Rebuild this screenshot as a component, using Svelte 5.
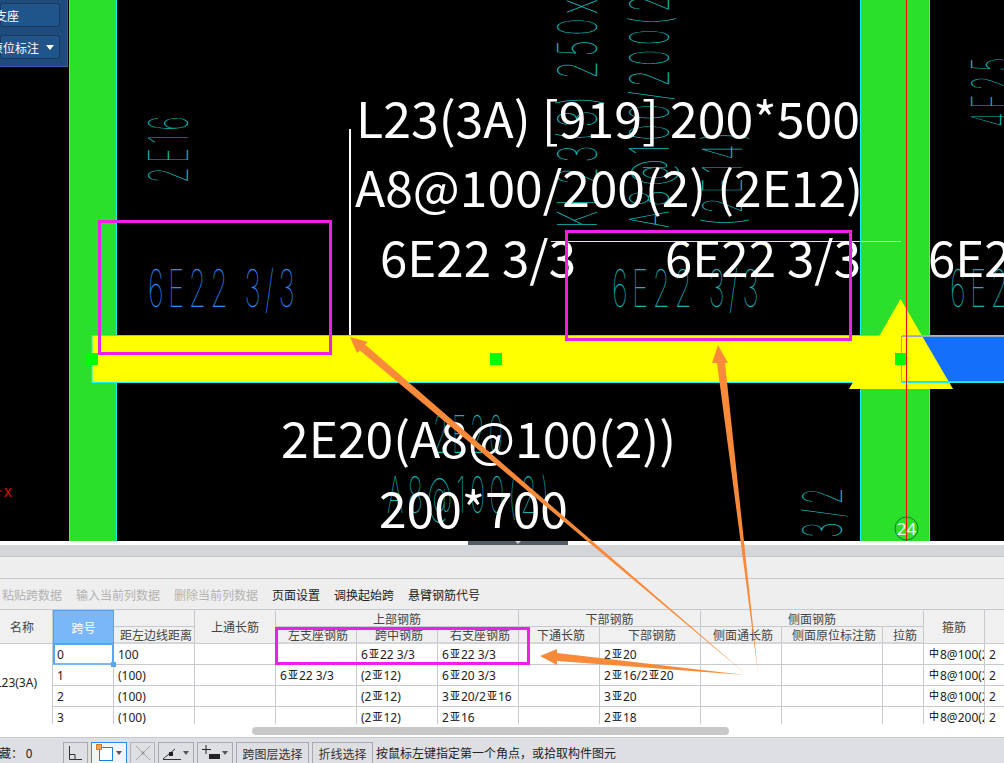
<script>
  const tools = [
    { label: '粘贴跨数据', off: true },
    { label: '输入当前列数据', off: true },
    { label: '删除当前列数据', off: true },
    { label: '页面设置' },
    { label: '调换起始跨' },
    { label: '悬臂钢筋代号' }
  ]

  // 亚 / 中 stand in for the rebar grade symbols
  const rows = [
    ['0', '100', '', '', '6亚22 3/3', '6亚22 3/3', '', '2亚20', '', '', '', '中8@100(2)', '2'],
    ['1', '(100)', '', '6亚22 3/3', '(2亚12)', '6亚20 3/3', '', '2亚16/2亚20', '', '', '', '中8@100(2)', '2'],
    ['2', '(100)', '', '', '(2亚12)', '3亚20/2亚16', '', '3亚20', '', '', '', '中8@100(2)', '2'],
    ['3', '(100)', '', '', '(2亚12)', '2亚16', '', '2亚18', '', '', '', '中8@200(2)', '2']
  ]

  const parts = (v) => v.split(/([亚中])/).filter(Boolean)
  const white = [
    { t: 'L23(3A) [919] 200*500', x: 356, y: 138, w: 504 },
    { t: 'A8@100/200(2) (2E12)', x: 355, y: 207, w: 508 },
    { t: '6E22 3/3', x: 380, y: 277, w: 196 },
    { t: '6E22 3/3', x: 665, y: 277, w: 196 },
    { t: '6E22 3/3', x: 928, y: 277, w: 196 },
    { t: '2E20(A8@100(2))', x: 281, y: 458, w: 395 },
    { t: '200*700', x: 379, y: 528, w: 189 }
  ]
  const flat = [
    { t: '6E22 3/3', x: 612, y: 307, w: 151, s: 52 },
    { t: '6E22 3/3', x: 950, y: 307, w: 151, s: 52 },
    { t: '2E20', x: 433, y: 453, w: 74, s: 52 },
    { t: 'A8@100(2)', x: 387, y: 513, w: 166, s: 50 }
  ]
  const turned = [
    { t: '2E16', x: 188, y: 183, w: 71, s: 54 },
    { t: 'KL23(3) 250x500', x: 597, y: 228, w: 298, s: 54 },
    { t: 'A8@100/200(2)', x: 669, y: 228, w: 250, s: 54 },
    { t: '(2E14)', x: 742, y: 226, w: 98, s: 54 },
    { t: '4E25', x: 1011, y: 127, w: 73, s: 54 },
    { t: '6E22 3/2', x: 842, y: 633, w: 150, s: 54 }
  ]
</script>

<div class="page">
  <svg class="cad" width="1004" height="541" viewBox="0 0 1004 541">
    <rect width="1004" height="541" fill="#000" />
    <rect x="69.5" y="-1" width="47" height="543" fill="#2be02b" stroke="#19f0f0" />
    <rect x="860.5" y="-1" width="69" height="543" fill="#2be02b" stroke="#19f0f0" />

    <line x1="350" y1="129" x2="350" y2="335" stroke="#fff" stroke-width="2" />
    <line x1="551" y1="241.5" x2="901" y2="241.5" stroke="#f4f46a" />

    {#each turned as l}
      <text class="stick" x={l.x} y={l.y} font-size={l.s} textLength={l.w} lengthAdjust="spacingAndGlyphs" transform="rotate(-90 {l.x} {l.y})">{l.t}</text>
    {/each}
    {#each flat as l}
      <text class="stick" x={l.x} y={l.y} font-size={l.s} textLength={l.w} lengthAdjust="spacingAndGlyphs">{l.t}</text>
    {/each}
    <text class="stick blue" x="148" y="307" font-size="52" textLength="151" lengthAdjust="spacingAndGlyphs">6E22 3/3</text>

    {#each white as l}
      <text class="label" x={l.x} y={l.y} textLength={l.w} lengthAdjust="spacingAndGlyphs">{l.t}</text>
    {/each}

    <rect x="916" y="336" width="90" height="46" fill="#1470fb" />
    <rect x="92" y="335.5" width="830" height="47" fill="#ff0" stroke="#19f0f0" />
    <polygon points="900.5,299 953,389 849,389" fill="#ff0" />
    <rect x="901.5" y="336.5" width="110" height="45" fill="none" stroke="#9aa6c0" />
    <line x1="902" y1="335.5" x2="1004" y2="335.5" stroke="#19f0f0" />
    <line x1="902" y1="382.5" x2="1004" y2="382.5" stroke="#19f0f0" />
    <rect x="86" y="353" width="12" height="12" fill="#0f0" />
    <rect x="490" y="353" width="12" height="12" fill="#0f0" />
    <rect x="895" y="353" width="12" height="12" fill="#0f0" />
    <line x1="906.5" y1="0" x2="906.5" y2="541" stroke="#f00" />

    <circle cx="906.5" cy="528.5" r="11.5" fill="none" stroke="#0a7a3a" />
    <text class="axis" x="906.5" y="535" text-anchor="middle">24</text>
    <text class="cross" x="4" y="497">X</text>
    <line x1="0" y1="491" x2="2" y2="491" stroke="#f00" />
  </svg>

  <div class="mini">
    <div class="mini-btn">支座</div>
    <div class="mini-btn">原位标注<i></i></div>
  </div>

  <div class="strip"><div class="grip"><i></i></div></div>
  <div class="band"></div>
  <div class="blank"></div>

  <div class="tools">
    {#each tools as b}
      <span class:off={b.off}>{b.label}</span>
    {/each}
  </div>

  <div class="grid">
    <div class="hd first" style="grid-row: span 2">名称</div>
    <div class="hd on" style="grid-row: span 2">跨号</div>
    <div class="hd"></div>
    <div class="hd" style="grid-row: span 2">上通长筋</div>
    <div class="hd" style="grid-column: span 3">上部钢筋</div>
    <div class="hd" style="grid-column: span 2">下部钢筋</div>
    <div class="hd" style="grid-column: span 3">侧面钢筋</div>
    <div class="hd" style="grid-row: span 2">箍筋</div>
    <div class="hd" style="grid-row: span 2"></div>
    <div class="hd sub">距左边线距离</div>
    <div class="hd sub">左支座钢筋</div>
    <div class="hd sub">跨中钢筋</div>
    <div class="hd sub">右支座钢筋</div>
    <div class="hd sub">下通长筋</div>
    <div class="hd sub">下部钢筋</div>
    <div class="hd sub">侧面通长筋</div>
    <div class="hd sub">侧面原位标注筋</div>
    <div class="hd sub">拉筋</div>

    <div class="name">L23(3A)</div>
    {#each rows as row, r}
      {#each row as v, c}
        <div class="td" class:cur={r === 0 && c === 0} class:last={r === 3}>
          {#each parts(v) as p}
            {#if p === '亚' || p === '中'}<span class="bar">{p}</span>{:else}{p}{/if}
          {/each}
          {#if r === 0 && c === 0}<i class="fill"></i>{/if}
        </div>
      {/each}
    {/each}
  </div>

  <div class="hscroll"><div class="thumb"></div></div>

  <div class="status">
    <span class="hide">藏： 0</span>
    <div class="ico w24">
      <svg width="16" height="16" viewBox="0 0 16 16"><path d="M2.5 1v13.5H15M2.5 9.5H8v5" fill="none" stroke="#333" /></svg>
    </div>
    <div class="ico w36 sel">
      <svg width="20" height="18" viewBox="0 0 20 18"><rect x="4.5" y="3.5" width="13" height="13" fill="#fff" stroke="#1b7fe0" /><rect x="1.5" y="0.5" width="5" height="5" fill="#f5a04e" stroke="#d97a20" /></svg>
      <em></em>
    </div>
    <div class="ico w25 dis">
      <svg width="18" height="18" viewBox="0 0 18 18"><path d="M2 2l14 14M16 2L2 16" stroke="#999" fill="none" /><circle cx="9" cy="9" r="1.5" fill="#888" /></svg>
    </div>
    <div class="ico w35">
      <svg width="20" height="16" viewBox="0 0 20 16"><path d="M1 14L13 4M1 14.5h18" stroke="#333" fill="none" /><rect x="7" y="7" width="4" height="4" fill="#222" /></svg>
      <em></em>
    </div>
    <div class="ico w35">
      <svg width="20" height="16" viewBox="0 0 20 16"><path d="M5 0v9M1 4.5h9" stroke="#222" fill="none" /><rect x="8" y="9" width="11" height="5" fill="#222" /></svg>
      <em></em>
    </div>
    <div class="ico text w72">跨图层选择</div>
    <div class="ico text w60">折线选择</div>
    <span class="hint">按鼠标左键指定第一个角点，或拾取构件图元</span>
  </div>

  <svg class="notes" width="1004" height="763" viewBox="0 0 1004 763">
    <g fill="none" stroke="#f01fe8" stroke-width="3">
      <rect x="99.5" y="221.5" width="231" height="132" />
      <rect x="566.5" y="231.5" width="284" height="108" />
      <rect x="276.5" y="628.5" width="252" height="35" />
    </g>
    <g fill="#f98a3a">
      <polygon points="350,337 368,342 365,344.5 747,675 360,350.5 357,353" />
      <polygon points="718,345 728,363 725,363 758,673 717,363 712,363" />
      <polygon points="540,656 557,649 557,653 745,675 557,661 557,665" />
    </g>
  </svg>
</div>

<style>
  :global(body) {
    margin: 0;
    overflow: hidden;
  }

  .page {
    position: relative;
    width: 1004px;
    height: 763px;
    overflow: hidden;
    background: #fff;
    font-family: "Noto Sans", "Noto Sans CJK SC", sans-serif;
    font-size: 12px;
    color: #222;
  }

  .cad {
    display: block;
  }

  .label {
    fill: #fff;
    font-family: "Noto Sans CJK SC", "Noto Sans", sans-serif;
    font-size: 49px;
    font-weight: 400;
  }

  .stick {
    fill: #12b4b4;
    font-family: Inter, Lato, sans-serif;
    font-weight: 100;
    letter-spacing: 0.16em;
  }

  .stick.blue {
    fill: #2a8cff;
  }

  .axis {
    fill: #fff;
    font-size: 17px;
  }

  .cross {
    fill: #f00;
    font-size: 13px;
  }

  .notes {
    position: absolute;
    left: 0;
    top: 0;
    pointer-events: none;
  }

  .mini {
    position: absolute;
    left: 0;
    top: 0;
    width: 68px;
    height: 67px;
    box-sizing: border-box;
    padding-top: 3px;
    display: flex;
    flex-direction: column;
    gap: 8px;
    background: #1f4b7c;
    border-right: 1px solid #2b67a8;
    border-bottom: 1px solid #2b67a8;
    overflow: hidden;
  }

  .mini-btn {
    width: 60px;
    height: 24px;
    flex: none;
    box-sizing: border-box;
    display: flex;
    align-items: center;
    justify-content: flex-end;
    white-space: nowrap;
    padding-right: 40px;
    background: #20558c;
    border: 1px solid #19395e;
    border-radius: 3px;
    color: #fff;
    font-family: "Noto Sans CJK SC", sans-serif;
    font-size: 12px;
    position: relative;
  }

  .mini-btn:last-child {
    padding-right: 20px;
  }

  .mini-btn i {
    position: absolute;
    right: 5px;
    top: 9px;
    border: 4px solid transparent;
    border-top: 5px solid #fff;
    border-bottom: 0;
  }

  .strip {
    height: 4px;
    display: flex;
    padding-left: 468px;
  }

  .grip {
    width: 100px;
    height: 4px;
    background: #555d68;
    display: flex;
    justify-content: center;
  }

  .grip i {
    border: 3px solid transparent;
    border-top: 3px solid #ccd;
    border-bottom: 0;
  }

  .band {
    height: 11px;
    background: #d5d6da;
    border-bottom: 1px solid #c4c5cb;
  }

  .blank {
    height: 21px;
    background: #eee;
    border-bottom: 1px solid #c8c9cf;
  }

  .tools {
    height: 30px;
    box-sizing: border-box;
    background: #eee;
    display: flex;
    align-items: center;
    gap: 14px;
    padding: 0 0 0 2px;
    font-family: "Noto Sans CJK SC", sans-serif;
    color: #222;
  }

  .tools .off {
    color: #b2b2b2;
  }

  .grid {
    display: grid;
    grid-template-columns: 53px 61px 81px 81px 81px 81px 81px 81px 101px 81px 101px 41px 61px 20px;
    grid-template-rows: 17px 17px 21px 21px 21px 18px;
    width: 1004px;
    overflow: hidden;
    border-top: 1px solid #c8c9cf;
    box-sizing: border-box;
    height: 115px;
  }

  .hd {
    background: #f0f0f0;
    border-right: 1px solid #c8c9cf;
    border-bottom: 1px solid #c8c9cf;
    display: flex;
    align-items: center;
    justify-content: center;
    color: #444;
    font-family: "Noto Sans CJK SC", sans-serif;
    white-space: nowrap;
    overflow: hidden;
  }

  .hd.first {
    padding-right: 8px;
  }

  .hd.on {
    background: #7ab7f9;
    color: #fff;
    border: 1px solid #5c9fe8;
  }

  .hd.sub {
    border-bottom: 2px solid #d5d6da;
    padding-left: 4px;
  }

  .name {
    grid-row: 3 / span 4;
    border-right: 1px solid #c8c9cf;
    display: flex;
    align-items: center;
    justify-content: flex-end;
    padding-right: 15px;
    white-space: nowrap;
    overflow: hidden;
    background: #fff;
    padding-bottom: 4px;
  }

  .td {
    position: relative;
    background: #fff;
    border-right: 1px solid #c8c9cf;
    border-bottom: 1px solid #c8c9cf;
    box-sizing: border-box;
    padding: 1px 0 0 4px;
    line-height: 19px;
    white-space: nowrap;
    overflow: hidden;
    color: #222;
  }

  .td.last {
    border-bottom: 0;
  }

  .td.cur {
    border: 1px solid #5aa5f0;
    border-bottom: 2px solid #7ab7f9;
    border-left: 2px solid #5aa5f0;
    border-right: 2px solid #5aa5f0;
    padding: 0 0 0 2px;
    overflow: visible;
  }

  .fill {
    position: absolute;
    right: -4px;
    bottom: -4px;
    width: 5px;
    height: 5px;
    background: #5aa5f0;
    z-index: 1;
  }

  .bar {
    font-family: "Noto Sans CJK SC", sans-serif;
    font-size: 10px;
    line-height: 0;
    vertical-align: 2px;
    margin: 0 1px;
    color: #000;
  }

  .hscroll {
    background: #fff;
    border-bottom: 1px solid #c8c9cf;
    padding: 3px 0 0 252px;
    height: 10px;
  }

  .thumb {
    width: 477px;
    height: 8px;
    background: #c8c8c8;
    border-radius: 4px;
  }

  .status {
    height: 25px;
    background: #dedfe3;
    display: flex;
    align-items: flex-start;
    padding-top: 4px;
    box-sizing: border-box;
    font-family: "Noto Sans CJK SC", sans-serif;
    gap: 3px;
  }

  .hide {
    width: 60px;
    flex: none;
    line-height: 21px;
    white-space: nowrap;
    text-indent: -1px;
    overflow: hidden;
  }

  .ico {
    height: 22px;
    box-sizing: border-box;
    border: 1px solid #a9aab0;
    background: #dedfe3;
    display: flex;
    align-items: center;
    justify-content: flex-start;
    padding-left: 3px;
    flex: none;
    position: relative;
  }

  .ico em {
    position: absolute;
    right: 4px;
    top: 8px;
    border: 3px solid transparent;
    border-top: 4px solid #555;
    border-bottom: 0;
  }

  .ico.text {
    justify-content: center;
    padding: 0;
    color: #333;
  }

  .sel {
    border-color: #2a8cf0;
    background: #f2f4f8;
  }

  .dis {
    opacity: 0.8;
  }

  .w24 { width: 25px; }
  .w25 { width: 25px; }
  .w35 { width: 36px; }
  .w36 { width: 36px; }
  .w72 { width: 73px; }
  .w60 { width: 61px; }

  .hint {
    line-height: 21px;
    white-space: nowrap;
    color: #222;
  }
</style>
